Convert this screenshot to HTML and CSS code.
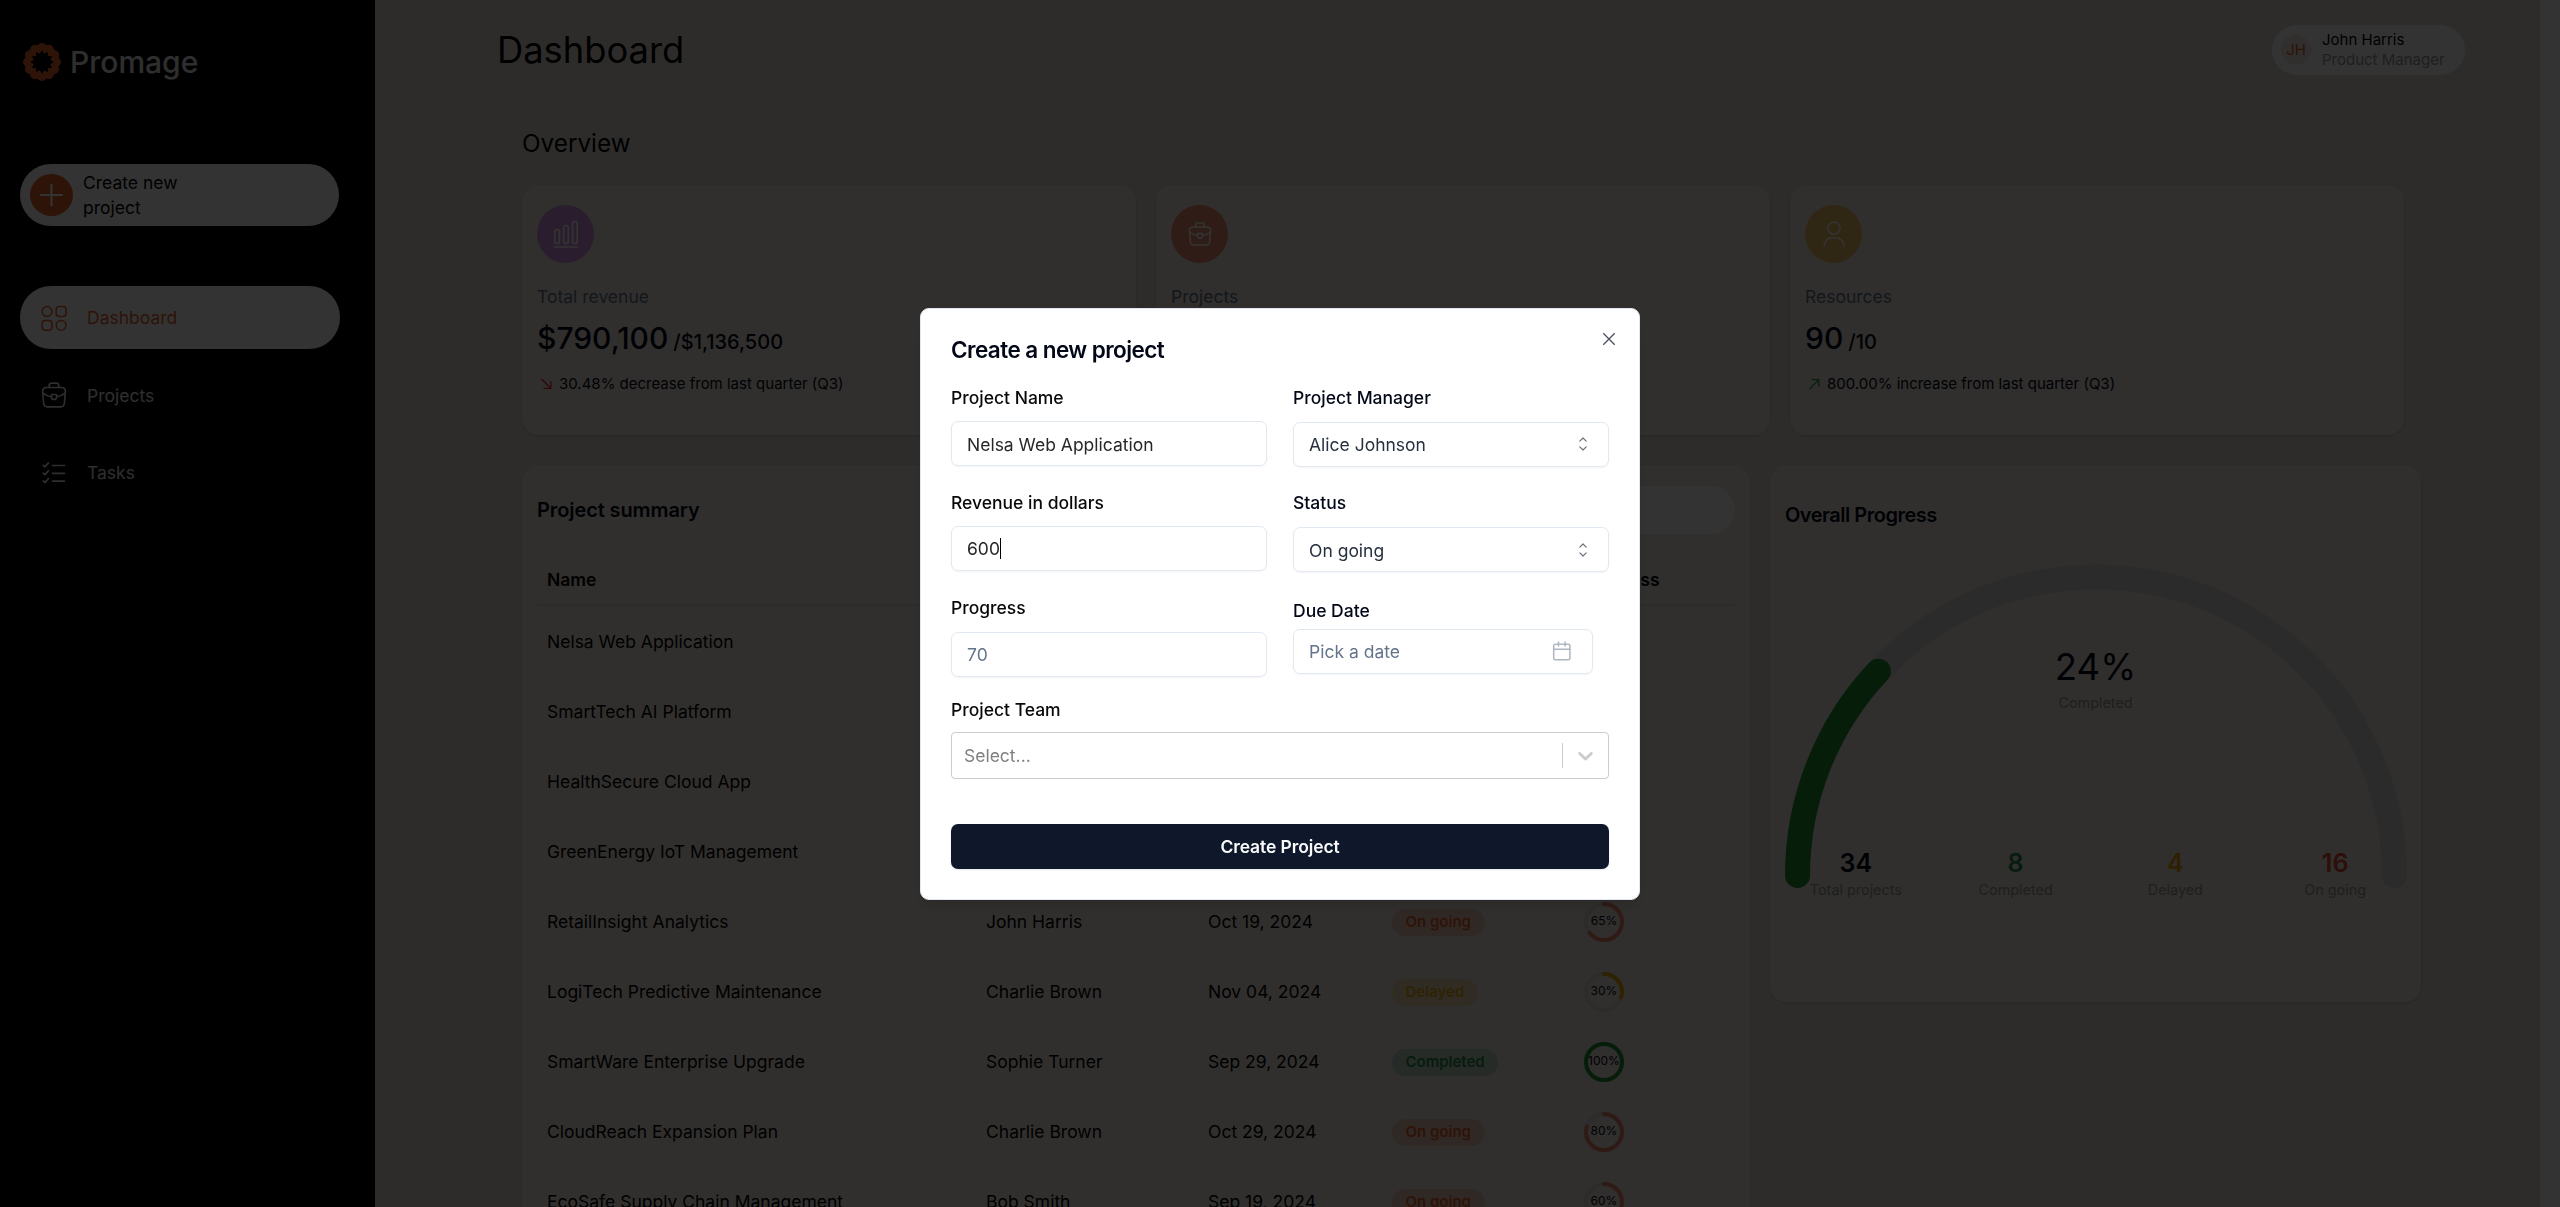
FILE: index.html
```html
<!DOCTYPE html>
<html lang="en">
<head>
<meta charset="utf-8">
<title>Promage</title>
<link rel="stylesheet" href="styles.css">
</head>
<body>
<svg class="defs" width="0" height="0">
  <symbol id="bag" viewBox="0 0 24 24" fill="none" stroke="currentColor" stroke-width="1.5" stroke-linecap="round" stroke-linejoin="round">
    <path d="M7.5 5V3.4C7.5 2 8.4 1 9.8 1h4.4c1.400 0 2.300 1 2.300 2.400V5"/>
    <path d="M5 5h14c2.300 0 3.800 1.600 3.600 3.900l-1 11C21.400 21.900 20.400 23 18.300 23H5.700c-2.100 0-3.100-1.100-3.300-3.100l-1-11C1.200 6.600 2.700 5 5 5z"/>
    <path d="M1.500 10c2.300 2 4.800 3.100 7.900 3.600M22.500 10c-2.300 2-4.800 3.100-7.900 3.600M9.600 11.500h4.800v2.300a2.400 2.400 0 0 1-4.800 0z"/>
  </symbol>
  <symbol id="updown" viewBox="0 0 10 14" fill="none" stroke="currentColor" stroke-width="1.200" stroke-linecap="round" stroke-linejoin="round">
    <path d="M1.800 4.200 5 1l3.200 3.200M1.800 9.800 5 13l3.200-3.200"/>
  </symbol>
</svg>

<div class="app">
  <aside class="sidebar">
    <div class="brand">
      <svg width="40" height="40" viewBox="0 0 40 40">
        <circle cx="20" cy="20" r="17.300" fill="#e65f2b"/>
        <circle cx="20" cy="20" r="14.300" fill="none" stroke="#e65f2b" stroke-width="9.500" stroke-linecap="round" pathLength="120" stroke-dasharray="0 10"/>
        <polygon fill="#000" transform="translate(20 20) scale(.94) translate(-20 -20)" points="32.500,20 28.700,22.300 30.800,26.250 26.400,26.400 26.250,30.800 22.300,28.700 20,32.500 17.700,28.700 13.750,30.800 13.600,26.400 9.200,26.250 11.300,22.300 7.500,20 11.300,17.700 9.200,13.750 13.600,13.600 13.750,9.200 17.700,11.300 20,7.500 22.300,11.300 26.250,9.200 26.400,13.600 30.800,13.750 28.700,17.700"/>
      </svg>
      <span>Promage</span>
    </div>
    <button class="create">
      <svg width="43" height="42" viewBox="0 0 43 42"><ellipse cx="21.500" cy="21" rx="21.500" ry="21" fill="#e65f2b"/><path d="M21.500 10.500v21M11 21h21" stroke="#fff" stroke-width="2.200" stroke-linecap="round"/></svg>
      <span>Create new<br>project</span>
    </button>
    <nav class="nav">
      <a class="nav-item active">
        <svg width="28" height="28" viewBox="0 0 28 28" fill="none" stroke="currentColor" stroke-width="1.500"><circle cx="7" cy="7.500" r="4.900"/><rect x="16.200" y="2.600" width="9.800" height="9.800" rx="3"/><rect x="2.100" y="16.400" width="9.800" height="9.800" rx="3"/><circle cx="21.100" cy="21.300" r="4.900"/></svg>
        <span>Dashboard</span>
      </a>
      <a class="nav-item">
        <svg width="28" height="28" viewBox="-1 -1 26 26"><use href="#bag" width="24" height="24"/></svg>
        <span>Projects</span>
      </a>
      <a class="nav-item">
        <svg width="28" height="28" viewBox="0 0 28 28" fill="none" stroke="currentColor" stroke-width="1.700" stroke-linecap="round" stroke-linejoin="round"><path d="M12.500 6.500h12M12.500 14.300h12M12.500 22.200h12M3.300 6.300l1.700 1.500 3.400-3.900M3.300 14.100l1.700 1.500 3.400-3.900M3.300 22l1.700 1.500 3.400-3.900"/></svg>
        <span>Tasks</span>
      </a>
    </nav>
  </aside>

  <main class="main">
    <header class="topbar">
      <h1>Dashboard</h1>
      <div class="user">
        <span class="avatar">JH</span>
        <div><div>John Harris</div><div class="role">Product Manager</div></div>
      </div>
    </header>

    <h2 class="section-title">Overview</h2>
    <section class="stats">
      <article class="card stat">
        <span class="badge purple"><svg width="26" height="28" viewBox="0 0 26 28" fill="none" stroke="currentColor" stroke-width="1.700" stroke-linecap="round"><rect x="1.800" y="9.500" width="4.600" height="14" rx="2"/><rect x="10.700" y="5.500" width="4.600" height="18" rx="2"/><rect x="19.600" y="1.500" width="4.600" height="22" rx="2"/><path d="M1.500 27h23"/></svg></span>
        <div class="label">Total revenue</div>
        <div class="value">$790,100 <small>/$1,136,500</small></div>
        <div class="trend"><svg class="down" width="18" height="18" viewBox="0 0 18 18" fill="none" stroke="currentColor" stroke-width="1.300"><path d="M4.500 4l9.300 9.300M13.800 6v7.300H6.500"/></svg>30.48% decrease from last quarter (Q3)</div>
      </article>
      <article class="card stat">
        <span class="badge coral"><svg width="26" height="26" viewBox="-1 -1 26 26"><use href="#bag" width="24" height="24"/></svg></span>
        <div class="label">Projects</div>
      </article>
      <article class="card stat">
        <span class="badge gold"><svg width="24" height="26" viewBox="0 0 24 26" fill="none" stroke="currentColor" stroke-width="1.500" stroke-linecap="round"><circle cx="12" cy="7.200" r="6"/><path d="M2 25c.500-5.500 4.500-8.500 10-8.500S21.500 19.500 22 25"/></svg></span>
        <div class="label">Resources</div>
        <div class="value">90 <small>/10</small></div>
        <div class="trend"><svg class="up" width="18" height="18" viewBox="0 0 18 18" fill="none" stroke="currentColor" stroke-width="1.300"><path d="M4.500 14l9.300-9.300M6.500 4.700h7.300V12"/></svg>800.00% increase from last quarter (Q3)</div>
      </article>
    </section>

    <section class="panels">
      <article class="card summary">
        <div class="summary-head"><h3>Project summary</h3><span class="search"></span></div>
        <div class="row head"><span>Name</span><span></span><span></span><span></span><span>Progress</span></div>
        <div class="row"><span>Nelsa Web Application</span></div>
        <div class="row"><span>SmartTech AI Platform</span></div>
        <div class="row"><span>HealthSecure Cloud App</span></div>
        <div class="row"><span>GreenEnergy IoT Management</span></div>
        <div class="row"><span>RetailInsight Analytics</span><span>John Harris</span><span>Oct 19, 2024</span><span><i class="pill going">On going</i></span><span class="ring going"><svg viewBox="0 0 40 40"><circle cx="20" cy="20" r="18"/><circle class="arc" cx="20" cy="20" r="18" pathLength="100" stroke-dasharray="65 100"/></svg><b>65%</b></span></div>
        <div class="row"><span>LogiTech Predictive Maintenance</span><span>Charlie Brown</span><span>Nov 04, 2024</span><span><i class="pill delayed">Delayed</i></span><span class="ring delayed"><svg viewBox="0 0 40 40"><circle cx="20" cy="20" r="18"/><circle class="arc" cx="20" cy="20" r="18" pathLength="100" stroke-dasharray="30 100"/></svg><b>30%</b></span></div>
        <div class="row"><span>SmartWare Enterprise Upgrade</span><span>Sophie Turner</span><span>Sep 29, 2024</span><span><i class="pill done">Completed</i></span><span class="ring done"><svg viewBox="0 0 40 40"><circle cx="20" cy="20" r="18"/><circle class="arc" cx="20" cy="20" r="18" pathLength="100" stroke-dasharray="100 100"/></svg><b>100%</b></span></div>
        <div class="row"><span>CloudReach Expansion Plan</span><span>Charlie Brown</span><span>Oct 29, 2024</span><span><i class="pill going">On going</i></span><span class="ring going"><svg viewBox="0 0 40 40"><circle cx="20" cy="20" r="18"/><circle class="arc" cx="20" cy="20" r="18" pathLength="100" stroke-dasharray="80 100"/></svg><b>80%</b></span></div>
        <div class="row"><span>EcoSafe Supply Chain Management</span><span>Bob Smith</span><span>Sep 19, 2024</span><span><i class="pill going">On going</i></span><span class="ring going"><svg viewBox="0 0 40 40"><circle cx="20" cy="20" r="18"/><circle class="arc" cx="20" cy="20" r="18" pathLength="100" stroke-dasharray="60 100"/></svg><b>60%</b></span></div>
      </article>

      <article class="card overall">
        <h3>Overall Progress</h3>
        <div class="gauge">
          <svg width="622" height="326" viewBox="0 0 622 326" fill="none" stroke-width="25" stroke-linecap="round">
            <path d="M12.500 311.500a298.500 298.500 0 0 1 597 0" stroke="#d6d6da"/>
            <path d="M12.500 311.500a298.500 298.500 0 0 1 597 0" stroke="#199330" pathLength="100" stroke-dasharray="24 200"/>
          </svg>
          <div class="gauge-text"><strong>24%</strong><span>Completed</span></div>
          <div class="totals">
            <div><b>34</b>Total projects</div>
            <div><b class="t-green">8</b>Completed</div>
            <div><b class="t-gold">4</b>Delayed</div>
            <div><b class="t-red">16</b>On going</div>
          </div>
        </div>
      </article>
    </section>
  </main>
</div>

<div class="overlay"></div>

<div class="dialog" role="dialog">
  <svg class="close" width="14" height="14" viewBox="0 0 14 14" stroke="currentColor" stroke-width="1.300"><path d="M1.300 1.300l11.400 11.400M12.700 1.300L1.300 12.700"/></svg>
  <h2>Create a new project</h2>
  <div class="form">
    <div class="column">
      <label>Project Name</label>
      <div class="input low">Nelsa Web Application</div>
      <label>Revenue in dollars</label>
      <div class="input">600<span class="caret"></span></div>
      <label>Progress</label>
      <div class="input placeholder last">70</div>
    </div>
    <div class="column right">
      <label>Project Manager</label>
      <div class="input select">Alice Johnson<svg width="10" height="14"><use href="#updown"/></svg></div>
      <label>Status</label>
      <div class="input select low">On going<svg width="10" height="14"><use href="#updown"/></svg></div>
      <label class="due">Due Date</label>
      <div class="input placeholder date">Pick a date<svg width="20" height="20" viewBox="0 0 20 20" fill="none" stroke="currentColor" stroke-width="1.500" stroke-linecap="round"><rect x="1.700" y="3.200" width="16.200" height="15.600" rx="1.500"/><path d="M1.700 8.200h16.200M6.500 1v4M13.100 1v4"/></svg></div>
    </div>
  </div>
  <label>Project Team</label>
  <div class="team"><span>Select...</span><svg width="25" height="25" viewBox="0 0 20 20"><path fill="currentColor" d="M4.516 7.548c.436-.446 1.043-.481 1.576 0L10 11.295l3.908-3.747c.533-.481 1.141-.446 1.574 0 .436.445.408 1.197 0 1.615-.406.418-4.695 4.502-4.695 4.502a1.095 1.095 0 0 1-1.576 0S4.924 9.581 4.516 9.163s-.436-1.170 0-1.615z"/></svg></div>
  <button class="submit">Create Project</button>
</div>
</body>
</html>
```
FILE: styles.css
```css
* { box-sizing: border-box; margin: 0; padding: 0; }
html, body { height: 100%; overflow: hidden; }
body { font-family: Inter, "Liberation Sans", sans-serif; font-size: 17.500px; line-height: 27px; color: #020817; background: #fff; }
svg { display: block; flex: none; }
h1, h2, h3 { font-weight: 500; }
button { font: inherit; border: 0; text-align: left; }
.defs { position: absolute; }

.app { display: flex; height: 1207px; padding-right: 20px; overflow: hidden; }

.sidebar { width: 375px; flex: none; background: #000; padding: 42px 35px 0 20px; color: #fff; }
.brand { display: flex; align-items: center; gap: 8px; height: 40px; padding-left: 2px; font-size: 30px; font-weight: 500; color: #e6e6e6; }
.create { display: flex; align-items: center; gap: 10px; width: 319px; height: 62px; margin-top: 82px; padding-left: 10px; border-radius: 31px; background: #fff; color: #000; line-height: 25px; }
.nav { display: flex; flex-direction: column; gap: 14.500px; margin-top: 60px; }
.nav-item { display: flex; align-items: center; gap: 19px; width: 320px; height: 63px; padding-left: 20px; border-radius: 31px; color: #e6e6e6; }
.nav-item.active { background: #fff; color: #e65f2b; }

.main { flex: 1; min-width: 0; background: #e2ddd3; }
.topbar { display: flex; align-items: center; justify-content: space-between; height: 100px; margin-left: 48px; padding: 0 75px 0 74px; border-bottom: 1px solid #d6d1c8; }
.topbar h1 { padding-top: 2px; font-size: 36.300px; font-weight: 400; color: #000; }
.user { display: flex; align-items: center; gap: 11px; width: 193px; height: 50px; padding-left: 9px; border-radius: 25px; background: #fff; font-size: 15px; line-height: 20px; color: #000; white-space: nowrap; }
.user .role { color: #999; }
.avatar { display: grid; place-items: center; width: 30px; height: 30px; flex: none; border-radius: 50%; background: #f1e8e0; color: #e65f2b; }

.section-title { margin: 29px 0 28px 147px; font-size: 24.300px; line-height: 28px; font-weight: 400; color: #000; }
.card { background: #f1e8e0; border-radius: 16px; box-shadow: 0 1px 3px rgba(0, 0, 0, .15); }
.stats { display: grid; grid-template-columns: repeat(3, 614px); gap: 20px; margin-left: 147px; }
.stat { height: 250px; padding: 20px 15px; }
.badge { display: grid; place-items: center; width: 57px; height: 58px; border-radius: 50%; color: #fff; }
.purple { background: #d398e7; }
.coral { background: #f08e6e; }
.gold { background: #f1be64; }
.label { margin-top: 20px; color: #64748b; }
.value { margin-top: 8px; font-size: 30px; line-height: 40px; font-weight: 500; }
.value small { font-size: 20px; margin-left: -3px; }
.trend { display: flex; align-items: center; gap: 4px; margin-top: 10px; font-size: 15px; line-height: 24px; }
.down { color: #dc2626; }
.up { color: #16a34a; }

.panels { display: flex; align-items: flex-start; gap: 20px; margin: 30px 0 0 147px; }
.summary { width: 1228px; height: 800px; padding: 21px 15px; }
.summary-head { display: flex; justify-content: space-between; height: 48px; }
.summary-head h3 { padding-top: 11px; font-size: 20px; font-weight: 600; letter-spacing: -.1px; }
.search { width: 300px; height: 48px; border-radius: 24px; background: #fdfdff; }
.row { display: grid; grid-template-columns: 439px 222px 184px 192px 1fr; align-items: center; height: 70px; padding: 1px 0 0 10px; color: #000; white-space: nowrap; }
.row.head { height: 72px; padding-top: 32px; border-bottom: 2px solid #e0d9d3; font-weight: 600; align-items: start; }
.pill { display: inline-block; height: 27px; padding: 0 13.500px; border-radius: 14px; font-size: 15px; line-height: 26px; font-style: normal; font-weight: 600; vertical-align: middle; }
.pill.going { background: #f0c8b4; color: #e65f2b; }
.pill.delayed { background: #f0ddb0; color: #e4ac20; }
.pill.done { background: #bcd6c0; color: #1f8a4c; }
.ring { position: relative; width: 40px; height: 40px; }
.ring svg { width: 40px; height: 40px; transform: rotate(-90deg); fill: none; stroke: #d9d9de; stroke-width: 4; }
.ring.going .arc { stroke: #ee8468; }
.ring.delayed .arc { stroke: #e4ac00; }
.ring.done .arc { stroke: #199330; }
.ring .arc { stroke-linecap: round; }
.ring b { position: absolute; inset: 0 -5px 2px; display: grid; place-items: center; font-size: 12px; font-weight: 400; color: #020817; }

.overall { width: 651px; height: 537px; padding: 37px 15px; }
.overall h3 { font-size: 20px; font-weight: 600; letter-spacing: -.5px; }
.gauge { position: relative; margin-top: 35px; color: #999; font-size: 14.400px; }
.gauge-text { position: absolute; inset: 83px 0 auto; display: flex; flex-direction: column; align-items: center; line-height: 20px; }
.gauge-text strong { font-size: 36.700px; line-height: 40px; font-weight: 400; color: #020817; margin-bottom: 6px; }
.totals { position: absolute; top: 284px; left: -9px; width: 639px; display: grid; grid-template-columns: repeat(4, 1fr); text-align: center; line-height: 20px; }
.totals b { display: block; font-size: 25px; line-height: 30px; font-weight: 600; color: #020817; margin-bottom: 2px; }
.totals .t-green { color: #1f8a4c; }
.totals .t-gold { color: #e4a010; }
.totals .t-red { color: #dd4a2b; }

.overlay { position: fixed; inset: 0; background: rgba(0, 0, 0, .8); }
.dialog { position: fixed; left: 920px; top: 308px; width: 720px; height: 592px; padding: 27px 30px; background: #fff; border: 1px solid #e2e8f0; border-radius: 9px; box-shadow: 0 10px 15px -3px rgba(0, 0, 0, .1), 0 4px 6px -4px rgba(0, 0, 0, .1); }
.close { position: absolute; right: 23px; top: 23px; color: #4b4f5c; }
.dialog h2 { font-size: 22.500px; line-height: 27px; font-weight: 600; letter-spacing: -.56px; margin-bottom: 21px; }
.form { display: grid; grid-template-columns: 316px 316px; gap: 26px; }
.dialog label { display: block; line-height: 27px; font-weight: 500; color: #09090b; }
.dialog .right label { color: #020817; }
.input { display: flex; align-items: center; height: 45px; margin: 10px 0 23px; padding: 0 15px; border: 1px solid #e2e8f0; border-radius: 7px; box-shadow: 0 1px 2px rgba(0, 0, 0, .05); color: #27272a; }
.input.low { padding-top: 2px; }
.input.last { margin: 11px 0 0; }
.input.select { margin: 11px 0 22px; justify-content: space-between; padding-right: 20px; color: #27303f; }
.input.select svg { color: #6b7280; margin-top: -1px; }
.input.placeholder { color: #64748b; }
.caret { width: 1.500px; height: 21px; background: #000; }
.dialog .due { margin-top: 25px; }
.input.date { width: 300px; margin: 5px 0 0; justify-content: space-between; padding-right: 20px; }
.input.date svg { color: #b0b6c0; margin-top: -2px; }
.form + label { margin-top: 19px; }
.team { display: flex; align-items: center; justify-content: space-between; height: 47px; margin-top: 9px; padding: 0 10px 0 12px; border: 1px solid #ccc; border-radius: 4px; color: gray; }
.team svg { box-sizing: content-box; color: #ccc; padding: 0 0 0 10px; border-left: 1px solid #ccc; }
.submit { display: block; width: 100%; height: 45px; margin-top: 45px; border-radius: 7px; background: #0f172a; color: #f8fafc; font-weight: 600; letter-spacing: -.1px; text-align: center; box-shadow: 0 1px 2px rgba(0, 0, 0, .1); }
```
